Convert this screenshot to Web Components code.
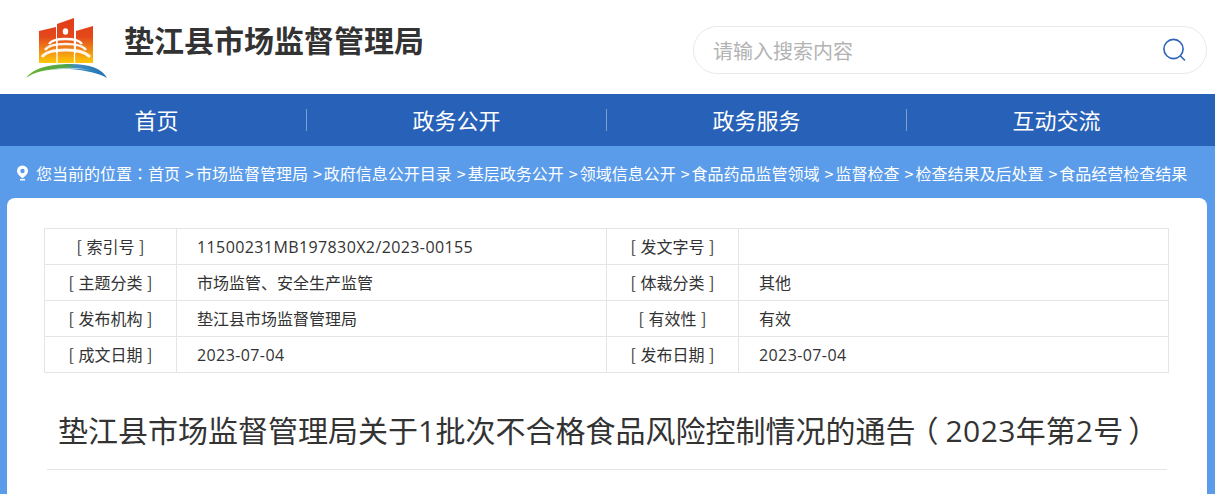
<!DOCTYPE html>
<html lang="zh">
<head>
<meta charset="utf-8">
<title>垫江县市场监督管理局</title>
<style>
  html, body { margin: 0; padding: 0; height: 494px; overflow: hidden; }
  body { background: #5a9ce9; font-family: "Noto Sans CJK SC", "Liberation Sans", sans-serif; color: #333; }
  site-header, site-nav, bread-crumb, info-card { display: block; }
</style>
</head>
<body>
<site-header name="垫江县市场监督管理局" placeholder="请输入搜索内容"></site-header>
<site-nav>
  <a>首页</a>
  <a>政务公开</a>
  <a>政务服务</a>
  <a>互动交流</a>
</site-nav>
<bread-crumb>
  <span>首页</span><span>市场监督管理局</span><span>政府信息公开目录</span><span>基层政务公开</span><span>领域信息公开</span><span>食品药品监管领域</span><span>监督检查</span><span>检查结果及后处置</span><span>食品经营检查结果</span>
</bread-crumb>
<info-card heading="垫江县市场监督管理局关于1批次不合格食品风险控制情况的通告（2023年第2号）">
  <meta-row k1="索引号" v1="11500231MB197830X2/2023-00155" k2="发文字号" v2=""></meta-row>
  <meta-row k1="主题分类" v1="市场监管、安全生产监管" k2="体裁分类" v2="其他"></meta-row>
  <meta-row k1="发布机构" v1="垫江县市场监督管理局" k2="有效性" v2="有效"></meta-row>
  <meta-row k1="成文日期" v1="2023-07-04" k2="发布日期" v2="2023-07-04"></meta-row>
</info-card>

<script>
const wrapLatin = (s) => s
    .replace(/[0-9A-Za-z\/-]+/g, (m) => `<span class="n">${m}</span>`)
    .replace(/（/g, '<span class="po">（</span>')
    .replace(/）/g, '<span class="pc">）</span>');

class SiteHeader extends HTMLElement {
    constructor() {
        super();
        this.attachShadow({ mode: 'open' });
        this.shadowRoot.innerHTML = `
        <style>
            :host { display: block; height: 94px; background: #fff; }
            .wrap { display: flex; align-items: flex-start; height: 100%; }
            svg.logo { width: 84px; height: 62px; margin: 17px 0 0 25px; flex: none; }
            h1 { margin: 18px 0 0 15px; font-size: 30px; line-height: 42px; font-weight: 700; color: #333; flex: none; white-space: nowrap; }
            .search { box-sizing: border-box; width: 514px; height: 48px; margin: 26px 8px 0 auto; border: 1px solid #e9e9e9; border-radius: 24px; display: flex; align-items: center; justify-content: space-between; padding: 0 20px 0 19px; font-size: 20px; color: #b3b3b3; }
            .search svg { width: 24px; height: 24px; flex: none; }
        </style>
        <div class="wrap">
            <svg class="logo" viewBox="0 0 84 62">
                <defs>
                    <linearGradient id="g" gradientUnits="userSpaceOnUse" x1="0" y1="1" x2="0" y2="46">
                        <stop offset="0" stop-color="#e03c18"/>
                        <stop offset=".42" stop-color="#e4481a"/>
                        <stop offset=".72" stop-color="#f08a16"/>
                        <stop offset="1" stop-color="#fdc905"/>
                    </linearGradient>
                    <linearGradient id="b" x1="0" y1="0" x2="1" y2="0">
                        <stop offset="0" stop-color="#6bb52f"/>
                        <stop offset=".5" stop-color="#4fa548"/>
                        <stop offset=".62" stop-color="#3f8fc0"/>
                        <stop offset="1" stop-color="#1f6fb5"/>
                    </linearGradient>
                </defs>
                <path d="M14 14L31 10V46H14Z" fill="url(#g)"/>
                <path d="M32 7L49 1V46H32Z" fill="url(#g)"/>
                <path d="M51 14L68 9V46H51Z" fill="url(#g)"/>
                <path d="M17 36H64V46H17Z" fill="url(#g)"/>
                <ellipse cx="40.500" cy="14.500" rx="2.700" ry="3.200" fill="#fff"/>
                <path d="M24 27Q27 22 40.500 22T57 27" fill="none" stroke="#fff" stroke-width="2.400"/>
                <path d="M20 33Q24 27 40.500 27T61 33" fill="none" stroke="#fff" stroke-width="2.400" opacity=".9"/>
                <path d="M17 40Q22 33 40.500 33T65 40" fill="none" stroke="#fff" stroke-width="2.800" opacity=".9"/>
                <path d="M32 22V46M49.500 22V46" stroke="#fff" stroke-width="1.300"/>
                <path d="M1 61Q10 48 42 47Q74 46 82 61Q70 54 44 52Q14 51 1 61Z" fill="url(#b)"/>
                <path d="M26 52.500Q42 49 66 53Q46 51 26 52.500Z" fill="#b6d8ec"/>
            </svg>
            <h1>${this.getAttribute('name')}</h1>
            <div class="search">
                <span>${this.getAttribute('placeholder')}</span>
                <svg viewBox="0 0 24 24" fill="none" stroke="#2e63b8" stroke-width="1.6"><circle cx="11.5" cy="11" r="9.6"/><path d="M18.5 18l4 4" stroke-linecap="round"/></svg>
            </div>
        </div>`;
    }
}

class SiteNav extends HTMLElement {
    constructor() {
        super();
        this.attachShadow({ mode: 'open' });
        this.shadowRoot.innerHTML = `
        <style>
            :host { display: block; height: 52px; background: #2861b8; }
            nav { display: grid; grid-template-columns: repeat(4, 300px); width: 1200px; margin-left: 7px; height: 100%; align-items: center; }
            ::slotted(a) { display: block; height: 22px; line-height: 20px; text-align: center; color: #fff; font-size: 22px; border-right: 1px solid #7e9fd3; }
            ::slotted(a:last-child) { border-right-color: transparent; }
        </style>
        <nav><slot></slot></nav>`;
    }
}

class BreadCrumb extends HTMLElement {
    constructor() {
        super();
        this.attachShadow({ mode: 'open' });
        this.shadowRoot.innerHTML = `
        <style>
            :host { display: block; height: 52px; }
            .row { display: flex; align-items: center; height: 54px; padding-left: 16px; font-size: 16px; color: #fff; white-space: nowrap; }
            svg { width: 13px; height: 16px; flex: none; margin-right: 7px; }
            .colon { font-family: "Noto Sans CJK TC", sans-serif; }
            ::slotted(span:not(:first-of-type)) { margin-left: 5px; }
            ::slotted(span:not(:first-of-type))::before { content: ">"; margin-right: 2px; }
        </style>
        <div class="row">
            <svg viewBox="0 0 13 16"><path fill-rule="evenodd" fill="#fff" d="M6.500 .5A5.500 5.500 0 0 1 12 6C12 9 8.500 11.500 6.500 13.500C4.500 11.500 1 9 1 6A5.500 5.500 0 0 1 6.500 .5ZM6.500 3.800A2.200 2.200 0 1 0 6.500 8.200A2.200 2.200 0 1 0 6.500 3.800Z"/><rect x="4" y="14" width="5" height="1.500" fill="#fff"/></svg>
            <span>您当前的位置<span class="colon" lang="zh-TW">：</span></span><slot></slot>
        </div>`;
    }
}

class MetaRow extends HTMLElement {
    constructor() {
        super();
        this.attachShadow({ mode: 'open' });
        const a = (n) => this.getAttribute(n) || '';
        this.shadowRoot.innerHTML = `
        <style>
            :host { display: grid; grid-template-columns: 132px 430px 132px 1fr; height: 36px; border-bottom: 1px solid #e5e5e5; box-sizing: border-box; font-size: 16px; color: #333; }
            div { display: flex; align-items: center; padding: 0 0 2px 20px; border-right: 1px solid #e5e5e5; white-space: nowrap; }
            div:last-child { border-right: 0; }
            .k { justify-content: center; padding-left: 0; word-spacing: 1px; white-space: pre; }
            .n { font-family: "Open Sans", sans-serif; letter-spacing: .4px; }
        </style>
        <div class="k">[ ${a('k1')} ]</div><div><span>${wrapLatin(a('v1'))}</span></div>
        <div class="k">[ ${a('k2')} ]</div><div><span>${wrapLatin(a('v2'))}</span></div>`;
    }
}

class InfoCard extends HTMLElement {
    constructor() {
        super();
        this.attachShadow({ mode: 'open' });
        this.shadowRoot.innerHTML = `
        <style>
            :host { display: block; box-sizing: border-box; width: 1200px; height: 300px; margin-left: 7px; background: #fff; border-radius: 8px 8px 0 0; padding: 30px 38px 0 37px; }
            .table { border: 1px solid #e5e5e5; border-bottom: 0; }
            h2 { margin: 33px 2px 0 3px; padding: 0 0 15px 11px; border-bottom: 1px solid #e5e5e5; font-size: 30px; line-height: 46px; font-weight: 400; color: #333; white-space: nowrap; }
            .n { font-family: "Open Sans", sans-serif; letter-spacing: .4px; }
            /* halt trims the empty half of the bracket so it can sit mid-box without overlapping */
            .po { font-feature-settings: "halt"; margin-left: 8px; margin-right: 7px; }
            .pc { font-feature-settings: "halt"; margin-left: 5px; margin-right: 10px; }
        </style>
        <div class="table"><slot></slot></div>
        <h2>${wrapLatin(this.getAttribute('heading'))}</h2>`;
    }
}

customElements.define('site-header', SiteHeader);
customElements.define('site-nav', SiteNav);
customElements.define('bread-crumb', BreadCrumb);
customElements.define('meta-row', MetaRow);
customElements.define('info-card', InfoCard);
</script>
</body>
</html>
